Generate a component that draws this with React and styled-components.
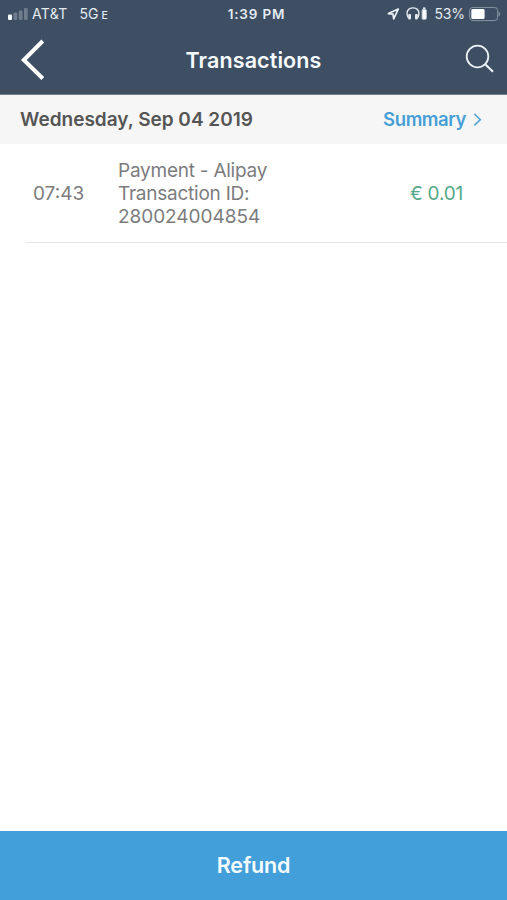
import React from 'react';
import styled, { createGlobalStyle } from 'styled-components';

const GlobalStyle = createGlobalStyle`
  * { box-sizing: border-box; }
  body { margin: 0; background: #fff; font-family: Inter, "Liberation Sans", sans-serif; }
`;

const Screen = styled.div`
  display: flex;
  flex-direction: column;
  width: 507px;
  height: 900px;
  background: #fff;
  overflow: hidden;
`;

const TopArea = styled.header`
  height: 95px;
  background: #3e4f63;
  border-bottom: 1px solid #76818e;
  color: #f5faff;
`;

const StatusBar = styled.div`
  display: grid;
  grid-template-columns: 1fr auto 1fr;
  align-items: center;
  height: 28px;
  padding: 0 6px 0 8px;
  font-size: 14px;
  line-height: 28px;
  color: #e4ebf2;
`;

const StatusGroup = styled.div`
  display: flex;
  align-items: center;
  justify-content: ${(p) => (p.$end ? 'flex-end' : 'flex-start')};
`;

const Carrier = styled.span`
  margin-left: 4px;
  letter-spacing: 0.3px;
`;

const Network = styled.span`
  display: flex;
  align-items: baseline;
  gap: 3px;
  margin-left: 12px;
  small { font-size: 10.5px; line-height: 1; font-weight: 500; }
`;

const Clock = styled.span`
  padding-left: 4px;
  font-weight: 600;
  font-size: 13.5px;
  letter-spacing: 0.85px;
`;

const Percent = styled.span`
  margin: 0 4px 0 6px;
  letter-spacing: -0.1px;
`;

const NavBar = styled.nav`
  display: grid;
  grid-template-columns: 60px 1fr 60px;
  align-items: center;
  height: 64px;
`;

const IconButton = styled.button`
  display: flex;
  padding: 0;
  border: 0;
  background: none;
  color: inherit;
  justify-self: ${(p) => (p.$end ? 'end' : 'start')};
  margin: ${(p) => (p.$end ? '-3px 12px 0 0' : '0 0 0 20px')};
`;

const Title = styled.h1`
  margin: 0;
  text-align: center;
  font-size: 21.5px;
  font-weight: 600;
  line-height: 28px;
  letter-spacing: 0.1px;
`;

const DateBar = styled.div`
  display: flex;
  align-items: center;
  justify-content: space-between;
  height: 49px;
  padding: 0 24px 0 20px;
  background: #f6f6f6;
  font-size: 19px;
  font-weight: 600;
`;

const DateLabel = styled.span`
  color: #555;
`;

const SummaryLink = styled.a`
  display: flex;
  align-items: center;
  gap: 7px;
  height: 22px;
  margin-bottom: 2px;
  color: #479fd6;
  font-size: 18.5px;
  line-height: 22px;
  letter-spacing: -0.42px;
`;

const Transaction = styled.article`
  display: grid;
  grid-template-columns: 85px 1fr auto;
  align-items: center;
  height: 99px;
  margin-left: 26px;
  padding: 0 44px 0 7px;
  border-bottom: 1px solid #e4e4e4;
  font-size: 19px;
  line-height: 23px;
  color: #7c7c7e;
`;

const Time = styled.time``;

const Details = styled.div`
  display: flex;
  flex-direction: column;
`;

const DetailLine = styled.span`
  letter-spacing: ${(p) => (p.$numeric ? '-0.05px' : '-0.24px')};
`;

const Amount = styled.span`
  color: #55a989;
  letter-spacing: -0.2px;
`;

const RefundButton = styled.button`
  height: 69px;
  margin-top: auto;
  padding: 0;
  border: 0;
  background: #439fda;
  color: #f3fcff;
  font: 600 21.5px/69px Inter, "Liberation Sans", sans-serif;
  letter-spacing: -0.2px;
`;

function SignalIcon() {
  return (
    <svg width="20" height="13" viewBox="0 0 20 13" fill="#f5faff">
      <rect x="0" y="6.5" width="4" height="5.5" rx="1" />
      <g opacity="0.27">
        <rect x="5.5" y="4.5" width="3.7" height="7.5" rx="1" />
        <rect x="10.8" y="2.5" width="3.7" height="9.5" rx="1" />
        <rect x="16" y="0" width="3.7" height="12" rx="1" />
      </g>
    </svg>
  );
}

const LocationSvg = styled.svg`
  margin-right: 6px;
`;

function LocationIcon() {
  return (
    <LocationSvg width="13" height="13" viewBox="0 0 13 13" fill="none" stroke="#edf3f9" strokeWidth="1.7" strokeLinejoin="round">
      <path d="M11.3 1 L1.4 5.6 L6 6.2 L6.7 10.9 Z" />
    </LocationSvg>
  );
}

function HeadphonesIcon() {
  return (
    <svg width="22" height="14" viewBox="0 0 22 14">
      <path d="M2.4 11 C-.8 5 2.2 .9 7 .9 S14.8 5 11.6 11" fill="none" stroke="#e4ebf2" strokeWidth="1.4" />
      <rect x="2.2" y="7" width="2.8" height="5.5" rx="1" fill="#e4ebf2" />
      <rect x="9" y="7" width="2.8" height="5.5" rx="1" fill="#e4ebf2" />
      <rect x="17" y="0.4" width="2.4" height="2" fill="#e4ebf2" />
      <rect x="16.1" y="2.6" width="4.2" height="9.6" rx="0.7" fill="#fff" stroke="#bcc7d2" />
    </svg>
  );
}

function BatteryIcon() {
  return (
    <svg width="32" height="15" viewBox="0 0 32 15">
      <rect x="0.7" y="0.4" width="28" height="13.2" rx="3.3" fill="none" stroke="#8996a5" strokeWidth="1" />
      <rect x="2.3" y="2" width="13.3" height="10" rx="1.5" fill="#fff" />
      <path d="M30 4.8 Q31.5 7 30 9.2 Z" fill="#8996a5" stroke="#8996a5" strokeWidth="0.5" />
    </svg>
  );
}

export default function App() {
  return (
    <>
      <GlobalStyle />
      <Screen>
        <TopArea>
          <StatusBar>
            <StatusGroup>
              <SignalIcon />
              <Carrier>AT&amp;T</Carrier>
              <Network>5G<small>E</small></Network>
            </StatusGroup>
            <Clock>1:39 PM</Clock>
            <StatusGroup $end>
              <LocationIcon />
              <HeadphonesIcon />
              <Percent>53%</Percent>
              <BatteryIcon />
            </StatusGroup>
          </StatusBar>
          <NavBar>
            <IconButton aria-label="Back">
              <svg width="28" height="42" viewBox="0 0 28 42" fill="none" stroke="#fff" strokeWidth="4">
                <path d="M22.8 2 L3.8 21 L22.8 39.5" />
              </svg>
            </IconButton>
            <Title>Transactions</Title>
            <IconButton aria-label="Search" $end>
              <svg width="30" height="30" viewBox="0 0 30 30" fill="none" stroke="#eaf1f7" strokeWidth="1.8">
                <circle cx="12.5" cy="12.5" r="10.8" />
                <path d="M20.2 20.3 L28 27.8" strokeWidth="2.2" />
              </svg>
            </IconButton>
          </NavBar>
        </TopArea>
        <DateBar>
          <DateLabel>Wednesday, Sep 04 2019</DateLabel>
          <SummaryLink>
            Summary
            <svg width="10" height="14" viewBox="0 0 10 14" fill="none" stroke="#5aa8d8" strokeWidth="1.7">
              <path d="M1.3 1.9 L7.3 7.7 L1.3 13.4" />
            </svg>
          </SummaryLink>
        </DateBar>
        <Transaction>
          <Time>07:43</Time>
          <Details>
            <DetailLine>Payment - Alipay</DetailLine>
            <DetailLine>Transaction ID:</DetailLine>
            <DetailLine $numeric>280024004854</DetailLine>
          </Details>
          <Amount>€ 0.01</Amount>
        </Transaction>
        <RefundButton>Refund</RefundButton>
      </Screen>
    </>
  );
}
